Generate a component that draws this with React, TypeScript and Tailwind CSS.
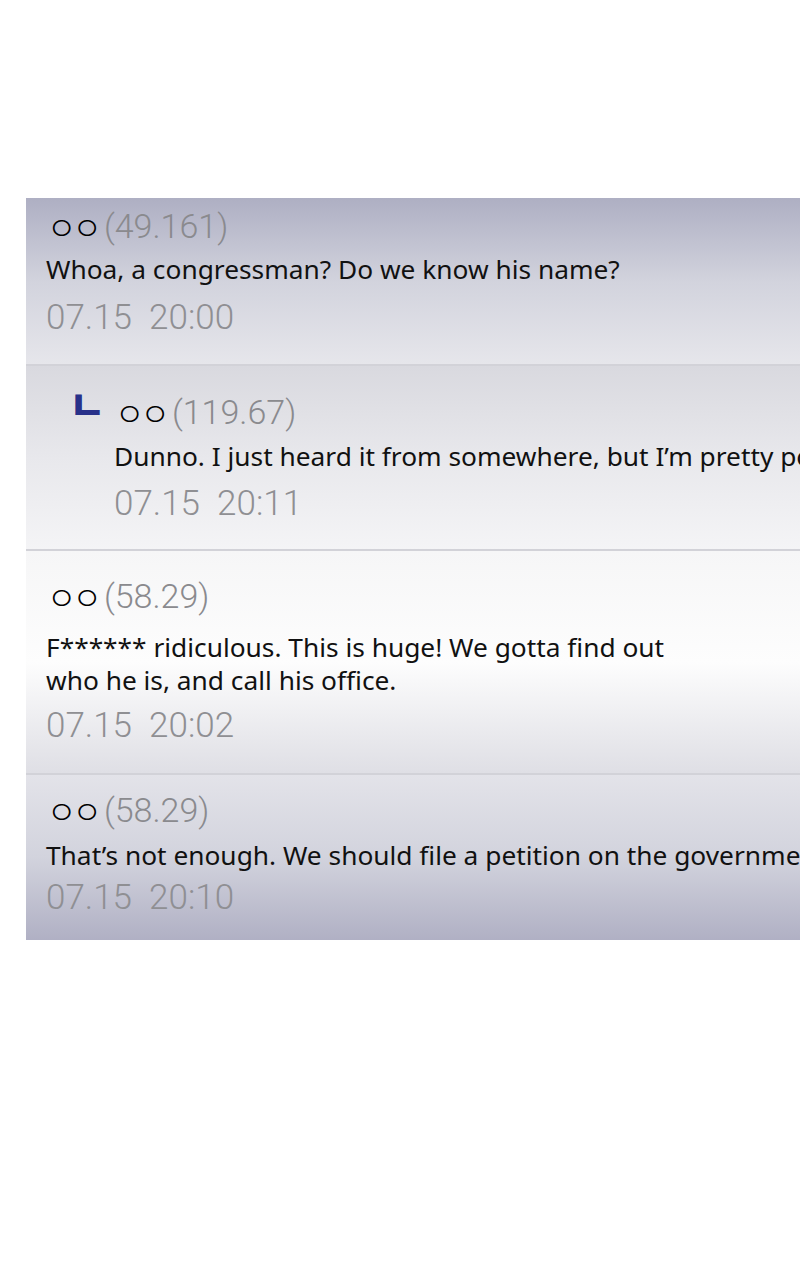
const sans = "font-['Noto_Sans',sans-serif]";
const num = "font-['Roboto',sans-serif] font-light";
const kr = "font-['Noto_Sans_CJK_KR',sans-serif]";

type Comment = {
    ip: string;
    body: string[];
    time: string;
    reply?: boolean;
    rowCls: string;
    bodyMt: string;
    timeMt: string;
};

const comments: Comment[] = [
    {
        ip: '(49.161)',
        body: ['Whoa, a congressman? Do we know his name?'],
        time: '07.15  20:00',
        rowCls: 'h-[168px] pt-[8px] bg-gradient-to-b from-[#aeafc3] via-[#d2d3dd] to-[#e6e6eb]',
        bodyMt: 'mt-[7px]',
        timeMt: 'mt-[9px]',
    },
    {
        ip: '(119.67)',
        body: ['Dunno. I just heard it from somewhere, but I’m pretty positive it’s true.'],
        time: '07.15  20:11',
        reply: true,
        rowCls: 'h-[185px] pt-[26px] bg-gradient-to-b from-[#d9d9df] via-[#e8e8ec] to-[#f4f4f6]',
        bodyMt: 'mt-[8px]',
        timeMt: 'mt-[8px]',
    },
    {
        ip: '(58.29)',
        body: ['F****** ridiculous. This is huge! We gotta find out', 'who he is, and call his office.'],
        time: '07.15  20:02',
        rowCls: 'h-[224px] pt-[25px] bg-gradient-to-b from-[#f6f6f7] via-[#fdfdfd] to-[#dfdfe5]',
        bodyMt: 'mt-[15px]',
        timeMt: 'mt-[6px]',
    },
    {
        ip: '(58.29)',
        body: ['That’s not enough. We should file a petition on the government website.'],
        time: '07.15  20:10',
        rowCls: 'h-[165px] pt-[15px] bg-gradient-to-b from-[#e3e3e9] via-[#d2d3dd] to-[#b0b0c4]',
        bodyMt: 'mt-[9px]',
        timeMt: 'mt-[3px]',
    },
];

function Row({ c, last }: { c: Comment; last: boolean }) {
    return (
        <div className={`${c.rowCls} ${last ? '' : 'border-b-2 border-[#d2d2d8]'} overflow-hidden`}>
            <div className={`flex ${c.reply ? 'pl-[48px]' : 'pl-[20px]'}`}>
                {c.reply && (
                    <div className="w-[40px] shrink-0">
                        <span className={`${kr} block font-black text-[40px] leading-[40px] text-[#28318a] -ml-[5px] -mt-[9px]`}>ㄴ</span>
                    </div>
                )}
                <div className="flex flex-col">
                    <div className="flex items-center h-[40px]">
                        <span className={`${kr} text-[32px] leading-[40px] text-black tracking-[-4px] ml-[1px] mr-[6px] font-light`}>ㅇㅇ</span>
                        <span className={`${num} text-[34px] leading-[40px] text-[#8a8a8e]`}>{c.ip}</span>
                    </div>
                    <div className={`${sans} text-[26.3px] leading-[33px] text-[#111] whitespace-nowrap ${c.bodyMt}`}>
                        {c.body.map((l, i) => <div key={i}>{l}</div>)}
                    </div>
                    <div className={`${num} text-[35px] leading-[46px] text-[#8f8f93] whitespace-pre ${c.timeMt}`}>{c.time}</div>
                </div>
            </div>
        </div>
    );
}

export default function App() {
    return (
        <div className="w-[800px] h-[1280px] bg-white overflow-hidden pt-[198px] pl-[26px]">
            <div className="w-[774px] flex flex-col">
                {comments.map((c, i) => <Row key={i} c={c} last={i === comments.length - 1} />)}
            </div>
        </div>
    );
}
